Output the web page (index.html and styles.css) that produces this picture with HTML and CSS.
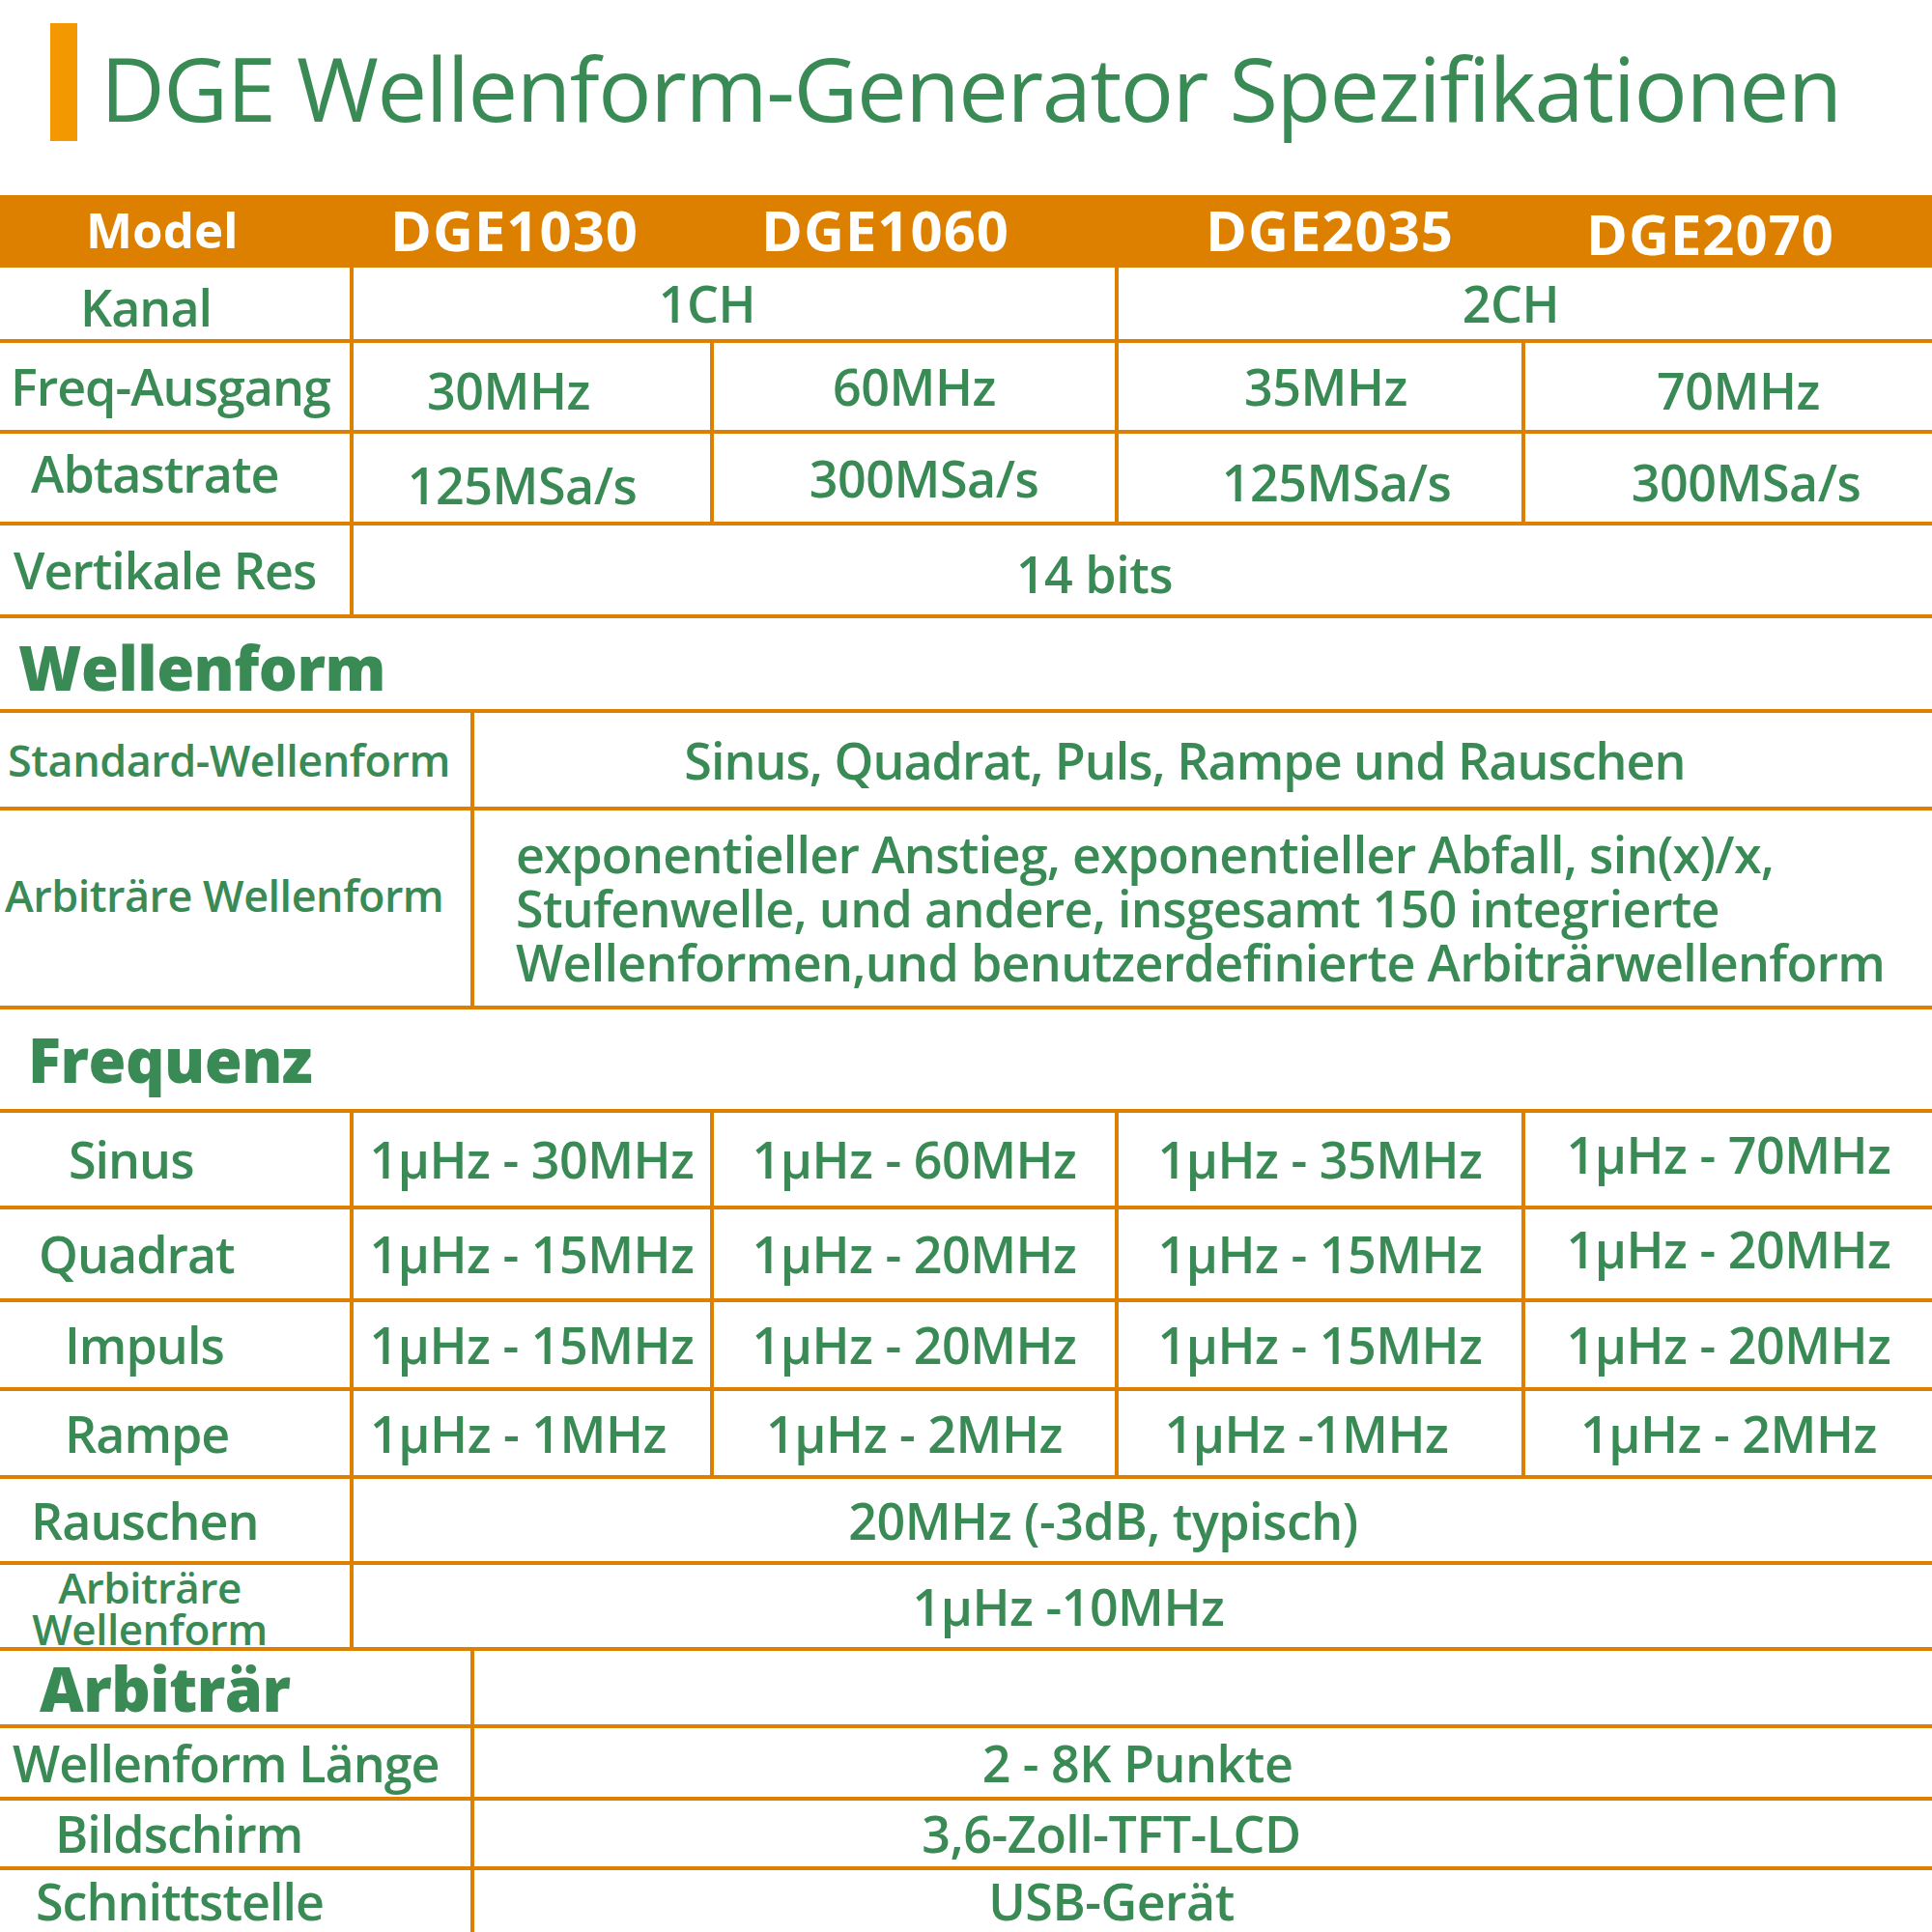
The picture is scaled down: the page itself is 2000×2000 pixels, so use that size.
FILE: index.html
```html
<!DOCTYPE html>
<html lang="de">
<head>
<meta charset="utf-8">
<title>DGE Wellenform-Generator Spezifikationen</title>
<link rel="stylesheet" href="styles.css">
</head>
<body>
<main class="sheet">
  <header class="title">
    <span class="title-bar"></span>
    <h1 class="title-text">DGE Wellenform-Generator Spezifikationen</h1>
  </header>

  <section class="grid grid-5 rows-models">
    <div class="cell hd hd-label lbl pl-89">Model</div>
    <div class="cell hd pr-36">DGE1030</div>
    <div class="cell hd pr-60">DGE1060</div>
    <div class="cell hd pl-20">DGE2035</div>
    <div class="cell hd pr-38 down">DGE2070</div>

    <div class="cell lbl pl-83 down">Kanal</div>
    <div class="cell span-2 pr-56">1CH</div>
    <div class="cell span-2 pr-30">2CH</div>

    <div class="cell lbl pl-11">Freq-Ausgang</div>
    <div class="cell pr-48 down">30MHz</div>
    <div class="cell">60MHz</div>
    <div class="cell pl-12">35MHz</div>
    <div class="cell pl-20 down">70MHz</div>

    <div class="cell lbl pl-32 up">Abtastrate</div>
    <div class="cell pr-20 down2">125MSa/s</div>
    <div class="cell pl-20">300MSa/s</div>
    <div class="cell pl-34 down">125MSa/s</div>
    <div class="cell pl-36 down">300MSa/s</div>

    <div class="cell lbl pl-14">Vertikale Res</div>
    <div class="cell span-4 pr-100 down">14 bits</div>
  </section>

  <h2 class="section-head pl-19">Wellenform</h2>

  <section class="grid grid-2 rows-wave">
    <div class="cell lbl small pl-8">Standard-Wellenform</div>
    <div class="cell tight pr-38">Sinus, Quadrat, Puls, Rampe und Rauschen</div>

    <div class="cell lbl small pl-5 up3">Arbiträre Wellenform</div>
    <div class="cell para">exponentieller Anstieg, exponentieller Abfall, sin(x)/x,<br>Stufenwelle, und andere, insgesamt 150 integrierte<br>Wellenformen,und benutzerdefinierte Arbiträrwellenform</div>
  </section>

  <h2 class="section-head section-head--tall pl-29">Frequenz</h2>

  <section class="grid grid-5 rows-freq">
    <div class="cell lbl pl-71">Sinus</div>
    <div class="cell">1µHz - 30MHz</div>
    <div class="cell">1µHz - 60MHz</div>
    <div class="cell">1µHz - 35MHz</div>
    <div class="cell up">1µHz - 70MHz</div>

    <div class="cell lbl pl-40">Quadrat</div>
    <div class="cell">1µHz - 15MHz</div>
    <div class="cell">1µHz - 20MHz</div>
    <div class="cell">1µHz - 15MHz</div>
    <div class="cell up">1µHz - 20MHz</div>

    <div class="cell lbl pl-67">Impuls</div>
    <div class="cell">1µHz - 15MHz</div>
    <div class="cell">1µHz - 20MHz</div>
    <div class="cell">1µHz - 15MHz</div>
    <div class="cell">1µHz - 20MHz</div>

    <div class="cell lbl pl-67">Rampe</div>
    <div class="cell pr-28">1µHz - 1MHz</div>
    <div class="cell">1µHz - 2MHz</div>
    <div class="cell pr-28">1µHz -1MHz</div>
    <div class="cell">1µHz - 2MHz</div>

    <div class="cell lbl pl-32">Rauschen</div>
    <div class="cell span-4 pr-82">20MHz (-3dB, typisch)</div>

    <div class="cell twoline">Arbiträre<br>Wellenform</div>
    <div class="cell span-4 pr-154">1µHz -10MHz</div>
  </section>

  <section class="grid grid-2 grid-open rows-arb">
    <div class="cell lbl heading-cell pl-41">Arbiträr</div>
    <div class="cell"></div>

    <div class="cell lbl pl-13">Wellenform Länge</div>
    <div class="cell pr-136">2 - 8K Punkte</div>

    <div class="cell lbl pl-57">Bildschirm</div>
    <div class="cell pr-190">3,6-Zoll-TFT-LCD</div>

    <div class="cell lbl pl-37">Schnittstelle</div>
    <div class="cell pr-190">USB-Gerät</div>
  </section>
</main>
</body>
</html>
```

FILE: styles.css
```css
* {
  box-sizing: border-box;
  margin: 0;
  padding: 0;
}

body {
  margin: 0;
  background: #ffffff;
  font-family: "Open Sans", "Noto Sans", sans-serif;
  color: #3a8a55;
}

.sheet {
  width: 2000px;
  overflow: hidden;
}

/* ---------- title ---------- */
.title {
  display: flex;
  align-items: flex-start;
  gap: 24px;
  height: 202px;
  padding: 24px 0 0 52px;
}

.title-bar {
  flex: none;
  width: 28px;
  height: 122px;
  background: #f39800;
}

.title-text {
  margin-top: 21px;
  font-size: 92px;
  font-weight: 400;
  line-height: 1;
  white-space: nowrap;
  letter-spacing: -1.4px;
}

/* ---------- grids ---------- */
.grid {
  display: grid;
  gap: 4px;
  background: #dd8000;
  border-bottom: 4px solid #dd8000;
}

.grid-open {
  border-bottom: none;
}

.grid-5 {
  grid-template-columns: 362px 369px 415px 417px 1fr;
}

.grid-2 {
  grid-template-columns: 487px 1fr;
}

.rows-models { grid-template-rows: 71px 74px 90px 91px 92px; }
.rows-wave   { grid-template-rows: 97px 202px; }
.rows-freq   { grid-template-rows: 96px 92px 88px 87px 85px 85px; }
.rows-arb    { grid-template-rows: 76px 71px 68px 64px; }

.cell {
  display: flex;
  align-items: center;
  justify-content: center;
  background: #ffffff;
  font-size: 52px;
  font-weight: 600;
  line-height: 1;
  white-space: nowrap;
  letter-spacing: -0.5px;
}

.cell.lbl {
  justify-content: flex-start;
  letter-spacing: -1px;
}

.cell.hd {
  background: #dd8000;
  color: #ffffff;
  font-weight: 700;
  font-size: 58px;
  letter-spacing: 1px;
}

.cell.hd-label {
  font-size: 51px;
  letter-spacing: 0;
}

.cell.small {
  font-size: 45px;
  letter-spacing: -0.5px;
}

.cell.tight {
  letter-spacing: -1px;
}

.cell.twoline {
  flex-direction: column;
  font-size: 44px;
  line-height: 43px;
  padding-right: 52px;
  padding-top: 4px;
  text-align: center;
  letter-spacing: -0.5px;
}

.cell.para {
  justify-content: flex-start;
  padding-left: 43px;
  line-height: 56px;
  white-space: nowrap;
  font-size: 52px;
  letter-spacing: -0.7px;
}

.span-2 { grid-column: span 2; }
.span-4 { grid-column: span 4; }

/* small vertical nudges */
.up    { padding-bottom: 10px; }
.up3   { padding-bottom: 28px; }
.down  { padding-top: 8px; }
.down2 { padding-top: 14px; }

/* ---------- section headings ---------- */
.section-head {
  display: flex;
  align-items: center;
  height: 98px;
  padding-top: 6px;
  border-bottom: 4px solid #dd8000;
  font-size: 63px;
  font-weight: 800;
  line-height: 1;
  letter-spacing: -0.5px;
}

.section-head--tall {
  height: 107px;
  padding-top: 0;
}

.cell.heading-cell {
  font-size: 63px;
  font-weight: 800;
  letter-spacing: -0.5px;
}

/* ---------- offsets ---------- */
.pl-5  { padding-left: 5px; }
.pl-8  { padding-left: 8px; }
.pl-11 { padding-left: 11px; }
.pl-12 { padding-left: 12px; }
.pl-13 { padding-left: 13px; }
.pl-14 { padding-left: 14px; }
.pl-19 { padding-left: 19px; }
.pl-20 { padding-left: 20px; }
.pl-29 { padding-left: 29px; }
.pl-32 { padding-left: 32px; }
.pl-34 { padding-left: 34px; }
.pl-36 { padding-left: 36px; }
.pl-37 { padding-left: 37px; }
.pl-40 { padding-left: 40px; }
.pl-41 { padding-left: 41px; }
.pl-57 { padding-left: 57px; }
.pl-67 { padding-left: 67px; }
.pl-71 { padding-left: 71px; }
.pl-83 { padding-left: 83px; }
.pl-89 { padding-left: 89px; }

.pr-20  { padding-right: 20px; }
.pr-28  { padding-right: 28px; }
.pr-30  { padding-right: 30px; }
.pr-36  { padding-right: 36px; }
.pr-38  { padding-right: 38px; }
.pr-48  { padding-right: 48px; }
.pr-56  { padding-right: 56px; }
.pr-60  { padding-right: 60px; }
.pr-82  { padding-right: 82px; }
.pr-100 { padding-right: 100px; }
.pr-136 { padding-right: 136px; }
.pr-154 { padding-right: 154px; }
.pr-190 { padding-right: 190px; }
```
